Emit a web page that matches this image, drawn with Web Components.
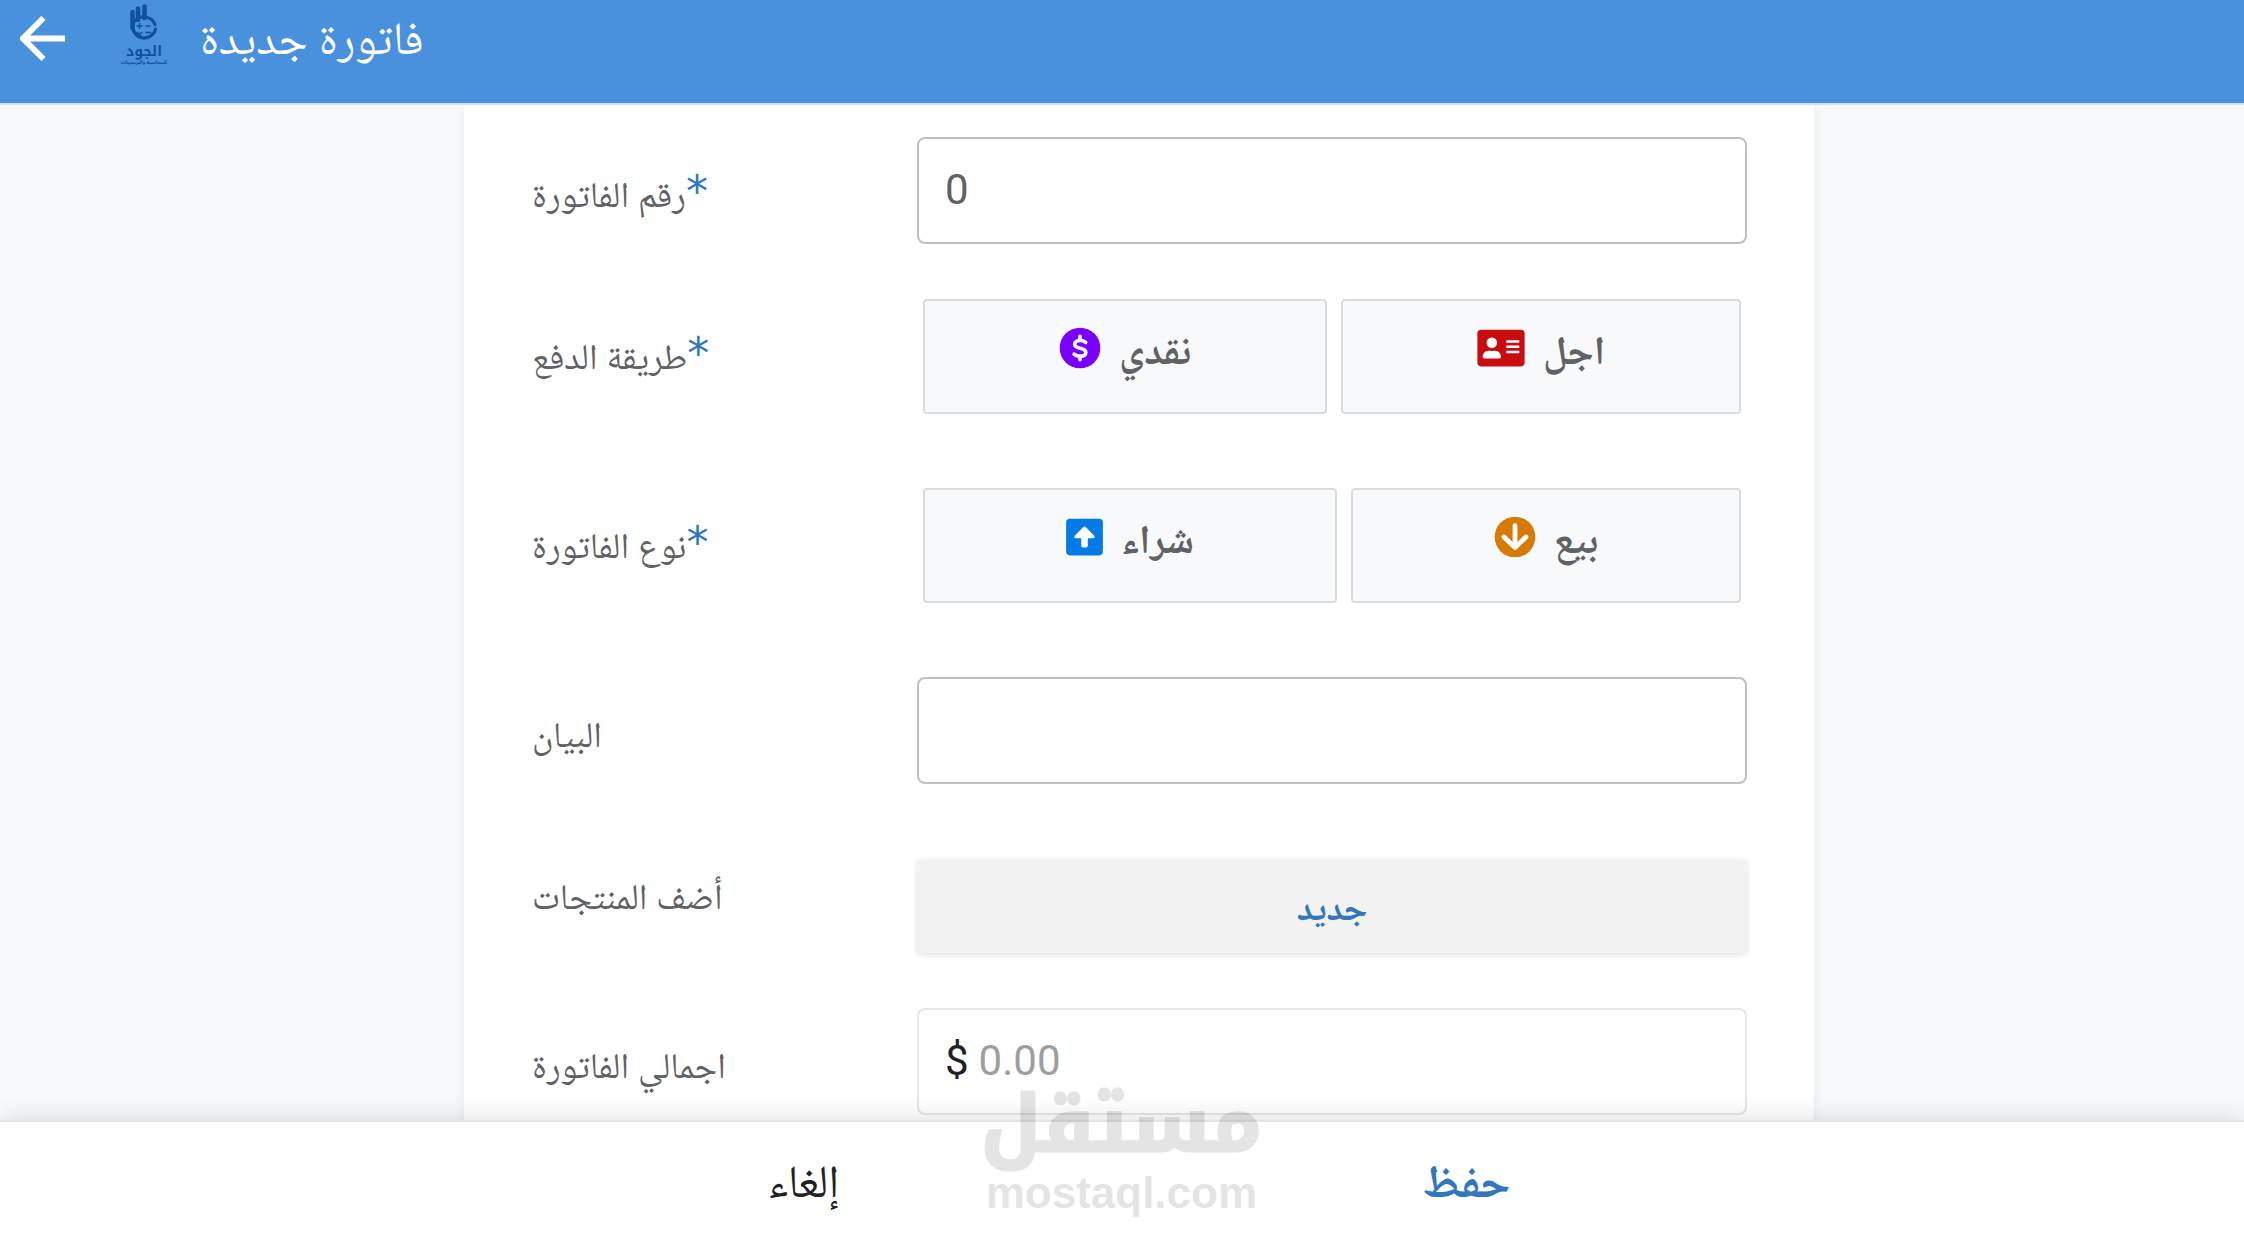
<!DOCTYPE html>
<html lang="ar">
<head>
<meta charset="utf-8">
<meta name="viewport" content="width=device-width, initial-scale=1">
<title>فاتورة جديدة</title>
<style>
  :root {
    --blue: #3277be;
    --bar: #4990dd;
    --ink: #5f6164;
    --page: #f7f9fb;
    --card-columns: minmax(0, 464fr) minmax(0, 1350fr) minmax(0, 430fr);
  }
  html, body { height: 100%; margin: 0; }
  body { font-family: Roboto, "Noto Naskh Arabic", "Noto Sans", sans-serif; color: var(--ink); background: var(--page); }
</style>
</head>
<body>
<invoice-app></invoice-app>

<script>
class BaseElement extends HTMLElement {
  constructor() {
    super();
    this.attachShadow({ mode: 'open' });
  }
  connectedCallback() {
    this.shadowRoot.innerHTML = `<style>* { box-sizing: border-box; } button, input { font: inherit; margin: 0; }</style>` + this.render();
  }
}

class AppHeader extends BaseElement {
  render() {
    return `
    <style>
      :host { display: flex; align-items: flex-start; height: 105px; flex: none; box-sizing: border-box; background: var(--bar); border-bottom: 2px solid #cfe2f7; color: #fff; }
      button { border: 0; background: none; color: inherit; padding: 16px 0 0 20px; width: 120px; text-align: left; }
      svg { display: block; }
      .brand { width: 48px; margin-right: 32px; padding-top: 4px; display: flex; flex-direction: column; align-items: center; color: #11509a; }
      .brand b { font: 700 14px/14px "Noto Kufi Arabic", "Noto Sans Arabic", sans-serif; }
      .brand small { font: 700 5px/8px "Noto Sans Arabic", sans-serif; white-space: nowrap; }
      h1 { margin: 0; font-size: 46px; line-height: 76px; font-weight: 400; }
    </style>
    <button aria-label="رجوع">
      <svg width="46" height="46" viewBox="0 0 46 46" fill="none" stroke="#fff" stroke-width="6"><path d="M45 22.500H4M23.500 2L3 22.500 23.500 43"/></svg>
    </button>
    <div class="brand">
      <svg width="28" height="41" viewBox="0 0 28 41" fill="none" stroke="#11509a" stroke-linecap="round">
        <path stroke-width="4.500" d="M2.500 24V8M8 16V4.500M14.500 14V2.500"/>
        <path stroke-width="3.200" d="M4 18A12 12 0 0 1 25 20.500"/>
        <path stroke-width="3.200" d="M3 20A11.500 11.500 0 1 0 25.500 25"/>
        <path stroke-width="1.500" stroke-linecap="butt" d="M6.500 22h6M9.500 19v6M15.500 22h5M7 28l5 5M12 28l-5 5M15.500 28.500h5.500M15.500 32.500h5.500"/>
      </svg>
      <b>الجود</b>
      <small>للمحاسبة والبرمجيات</small>
    </div>
    <h1 dir="rtl">${this.getAttribute('heading')}</h1>`;
  }
}

const rowStyle = `
  :host { display: grid; grid-template-columns: minmax(0, 385fr) minmax(0, 830fr); align-items: start; }
  .label { font-size: 36px; line-height: 48px; padding-top: 34px; white-space: nowrap; }
  .label i { font: 400 44px/1px "DejaVu Sans", sans-serif; color: var(--blue); }
`;

/* A labelled row whose control is passed in by its user. */
class FormRow extends BaseElement {
  text() {
    const star = this.hasAttribute('required') ? '<i>*</i>' : '';
    return `<bdo dir="ltr"><bdi dir="rtl">${this.getAttribute('label')}</bdi>${star}</bdo>`;
  }
  render() {
    return `<style>${rowStyle}</style>
      <span class="label" id="label">${this.text()}</span>
      <div role="group" aria-labelledby="label"><slot></slot></div>`;
  }
}

/* A labelled row with a text box. */
class TextRow extends FormRow {
  render() {
    const prefix = this.getAttribute('prefix');
    const readonly = this.hasAttribute('readonly');
    return `
    <style>${rowStyle}
      .box { display: flex; align-items: center; gap: 10px; height: 107px; padding: 0 26px 2px; border: 2px solid #bdbfc0; border-radius: 8px; font-size: 42px; background: #fff; }
      .box.quiet { border-color: #e5e6e7; }
      .prefix { color: #202124; }
      input { flex: 1; min-width: 0; height: 60px; border: 0; padding: 0; background: none; outline: 0; color: inherit; }
      input::placeholder { color: #9e9e9e; opacity: 1; }
    </style>
    <label class="label" for="field">${this.text()}</label>
    <div class="box ${readonly ? 'quiet' : ''}">
      ${prefix ? `<span class="prefix">${prefix}</span>` : ''}
      <input id="field" type="text" value="${this.getAttribute('value') || ''}" placeholder="${this.getAttribute('placeholder') || ''}" ${readonly ? 'readonly' : ''}>
    </div>`;
  }
}

class ChoiceGroup extends BaseElement {
  render() {
    return `<style>:host { display: flex; gap: 14px; margin: 0 6px 19px; }</style><slot></slot>`;
  }
}

const icons = {
  cash: `<svg width="42" height="42" viewBox="0 0 512 512"><circle cx="256" cy="256" r="248" fill="#7a00ff"/><path d="M326 188c-16-16-41-24-69-24-38 0-66 17-66 45 0 66 136 32 136 101 0 30-29 45-68 45-32 0-57-9-75-25M256 112v44M256 356v44" fill="none" stroke="#fff" stroke-width="44" stroke-linecap="round"/></svg>`,
  card: `<svg width="48" height="42" viewBox="0 0 576 512"><rect y="32" width="576" height="448" rx="46" fill="#c90c0f"/><g fill="#fff"><circle cx="176" cy="192" r="64"/><path d="M64 364c0-42 32-76 72-76h16q24 10 48 0h16c40 0 72 34 72 76 0 11-10 20-22 20H86c-12 0-22-9-22-20z"/><rect x="352" y="160" width="160" height="32" rx="8"/><rect x="352" y="224" width="160" height="32" rx="8"/><rect x="352" y="288" width="160" height="32" rx="8"/></g></svg>`,
  up: `<svg width="37" height="42" viewBox="0 0 448 512"><rect y="32" width="448" height="448" rx="46" fill="#037ae5"/><path d="M224 128q-10 0-17 8L105 240q-8 9-4 19t15 11h68v90q0 24 24 24h32q24 0 24-24v-90h68q11-1 15-11t-4-19L241 136q-7-8-17-8z" fill="#fff"/></svg>`,
  down: `<svg width="42" height="42" viewBox="0 0 512 512"><circle cx="256" cy="256" r="248" fill="#d77a05"/><path d="M256 118v244M122 256l134 130 134-130" fill="none" stroke="#fff" stroke-width="58" stroke-linecap="round" stroke-linejoin="round"/></svg>`
};

class ChoiceButton extends BaseElement {
  render() {
    return `
    <style>
      :host { display: block; flex: 1 1 auto; }
      button { display: flex; justify-content: center; align-items: flex-start; gap: 18px; width: 100%; height: 115px; padding: 26px 0 0; border: 2px solid #d9dbdc; border-radius: 4px; background: #f7f9fb; color: var(--ink); font-size: 40px; line-height: 48px; font-weight: 700; }
      svg { display: block; }
    </style>
    <button type="button">${icons[this.getAttribute('icon')]}<span dir="rtl"><slot></slot></span></button>`;
  }
}

class AddButton extends BaseElement {
  render() {
    return `
    <style>
      :host { display: block; margin-top: 20px; }
      button { display: block; width: 100%; height: 94px; padding: 4px 0 0; border: 0; border-radius: 4px; background: #f2f2f2; color: var(--blue); font-size: 36px; line-height: 90px; font-weight: 700; box-shadow: 0 2px 6px rgba(0, 0, 0, .12); }
    </style>
    <button type="button"><slot></slot></button>`;
  }
}

class InvoiceCard extends BaseElement {
  render() {
    return `
    <style>
      :host { display: grid; grid-template-columns: var(--card-columns); flex: 1; min-height: 0; overflow: hidden; }
      form { grid-column: 2; display: flex; flex-direction: column; gap: 55px; padding: 32px 67px 55px 68px; background: #fff; box-shadow: 0 0 12px rgba(0, 0, 0, .06); }
    </style>
    <form><slot></slot></form>`;
  }
}

class AppFooter extends BaseElement {
  render() {
    return `
    <style>
      :host { display: grid; grid-template-columns: var(--card-columns); flex: none; height: 119px; box-sizing: border-box; position: relative; border-top: 2px solid #e3e3e3; background: #fff; box-shadow: 0 0 26px rgba(0, 0, 0, .14); }
      div { grid-column: 2; display: grid; grid-template-columns: 1fr 1fr; padding: 0 16px 0 8px; }
      button { border: 0; padding: 2px 0 0; background: none; font-size: 46px; line-height: 115px; color: #202124; }
      .save { color: var(--blue); font-weight: 700; }
    </style>
    <div><button type="button">إلغاء</button><button type="button" class="save">حفظ</button></div>`;
  }
}

/* Translucent site mark laid over the lower edge of the form. */
class SiteMark extends BaseElement {
  render() {
    return `
    <style>
      :host { position: absolute; left: 44%; bottom: 22px; width: 268px; display: flex; flex-direction: column; align-items: center; gap: 5px; color: #000; opacity: .1; pointer-events: none; }
      b { font: 700 78px/78px "Noto Kufi Arabic", "Noto Sans Arabic", sans-serif; -webkit-text-stroke: 3px #000; }
      span { font: 700 44px/48px "Liberation Sans", sans-serif; }
    </style>
    <b>مستقل</b><span>mostaql.com</span>`;
  }
}

class InvoiceApp extends BaseElement {
  render() {
    return `
    <style>:host { display: flex; flex-direction: column; height: 100vh; position: relative; overflow: hidden; }</style>
    <app-header heading="فاتورة جديدة"></app-header>
    <invoice-card>
      <text-row label="رقم الفاتورة" required value="0"></text-row>
      <form-row label="طريقة الدفع" required>
        <choice-group>
          <choice-button icon="cash">نقدي</choice-button>
          <choice-button icon="card">اجل</choice-button>
        </choice-group>
      </form-row>
      <form-row label="نوع الفاتورة" required>
        <choice-group>
          <choice-button icon="up">شراء</choice-button>
          <choice-button icon="down">بيع</choice-button>
        </choice-group>
      </form-row>
      <text-row label="البيان"></text-row>
      <form-row label="أضف المنتجات"><add-button>جديد</add-button></form-row>
      <text-row label="اجمالي الفاتورة" prefix="$" placeholder="0.00" readonly></text-row>
    </invoice-card>
    <app-footer></app-footer>
    <site-mark></site-mark>`;
  }
}

customElements.define('app-header', AppHeader);
customElements.define('form-row', FormRow);
customElements.define('text-row', TextRow);
customElements.define('choice-group', ChoiceGroup);
customElements.define('choice-button', ChoiceButton);
customElements.define('add-button', AddButton);
customElements.define('invoice-card', InvoiceCard);
customElements.define('app-footer', AppFooter);
customElements.define('site-mark', SiteMark);
customElements.define('invoice-app', InvoiceApp);
</script>
</body>
</html>
